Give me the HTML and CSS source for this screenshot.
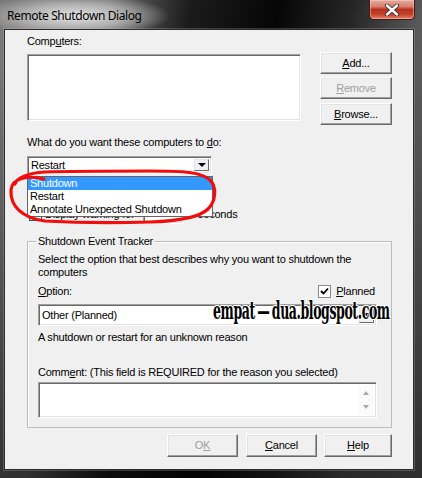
FILE: index.html
```html
<!DOCTYPE html>
<html>
<head>
<meta charset="utf-8">
<link rel="stylesheet" href="styles.css">
</head>
<body>
<div class="window">
  <div class="titlebar">
    <span class="title">Remote Shutdown Dialog</span>
    <div class="close">
      <svg width="16" height="12" viewBox="0 0 16 12">
        <path d="M3 1.5 L13 10.5 M13 1.5 L3 10.5" stroke="#3a2a2a" stroke-width="4.2" stroke-linecap="round"/>
        <path d="M3 1.5 L13 10.5 M13 1.5 L3 10.5" stroke="#ffffff" stroke-width="2.4" stroke-linecap="round"/>
      </svg>
    </div>
  </div>
  <div class="frame">
    <div class="client">
      <div class="label l-computers">Comp<u>u</u>ters:</div>
      <div class="row-computers">
        <div class="sunken listbox"></div>
        <div class="btn-col">
          <div class="btn"><u>A</u>dd...</div>
          <div class="btn disabled"><u>R</u>emove</div>
          <div class="btn browse"><u>B</u>rowse...</div>
        </div>
      </div>
      <div class="label l-todo">What do you want these computers to <u>d</u>o:</div>
      <div class="sunken combo combo-action">
        <span class="combo-text">Restart</span>
        <span class="arrow-btn"><span class="tri"></span></span>
      </div>
      <div class="warn-row">
        <span class="checkbox"></span>
        <span class="warn-text">Display warning for</span>
        <span class="sunken edit"></span>
        <span class="secs">seconds</span>
      </div>
      <div class="group">
        <span class="legend">Shutdown Event Tracker</span>
        <div class="desc">Select the option that best describes why you want to shutdown the computers</div>
        <div class="option-row">
          <span class="label"><u>O</u>ption:</span>
          <span class="planned"><span class="checkbox checked">
            <svg width="9" height="9" viewBox="0 0 9 9"><path d="M1 4 L3.5 6.5 L8 1.5" stroke="#000" stroke-width="1.8" fill="none"/></svg>
          </span><span class="planned-text"><u>P</u>lanned</span></span>
        </div>
        <div class="sunken combo combo-option">
          <span class="combo-text">Other (Planned)</span>
          <span class="arrow-btn"><span class="tri"></span></span>
        </div>
        <div class="reason">A shutdown or restart for an unknown reason</div>
        <div class="label l-comment">Comm<u>e</u>nt: (This field is REQUIRED for the reason you selected)</div>
        <div class="sunken memo">
          <span class="scroll">
            <span class="up"></span>
            <span class="down"></span>
          </span>
        </div>
      </div>
      <div class="footer">
        <div class="btn disabled w-ok">O<u>K</u></div>
        <div class="btn w-cancel"><u>C</u>ancel</div>
        <div class="btn w-help"><u>H</u>elp</div>
      </div>

      <div class="dropdown">
        <div class="item selected">Shutdown</div>
        <div class="item">Restart</div>
        <div class="item">Annotate Unexpected Shutdown</div>
      </div>
      <div class="watermark">empat — dua.blogspot.com</div>
      <svg class="scribble" width="409" height="439" viewBox="5 30 409 439">
        <path d="M44 179 C 28 175, 12 178, 11 190 C 10 206, 22 218, 45 221 C 80 223, 120 223, 150 222 C 180 221, 200 217, 208 209 C 216 201, 217 187, 210 180 C 201 172, 185 171, 150 171 C 110 171, 70 171, 45 172 C 30 173, 18 176, 15 184"
          fill="none" stroke="#f20d0d" stroke-width="3.2" stroke-linecap="round" stroke-linejoin="round"/>
      </svg>
    </div>
  </div>
</div>
</body>
</html>
```
FILE: styles.css
```css
html, body {
  margin: 0;
  padding: 0;
  width: 422px;
  height: 478px;
  overflow: hidden;
  background: #000;
}

.window {
  width: 422px;
  height: 478px;
  display: flex;
  flex-direction: column;
  background:
    linear-gradient(to bottom, rgba(0,0,0,0) 0px, rgba(0,0,0,0) 60px, rgba(0,0,0,0.55) 478px),
    linear-gradient(100deg, #7a7a7a 0%, #6a6a6a 22%, #1b1b1b 38%, #060606 55%, #262626 70%, #5a5a5a 84%, #666 100%);
  font-family: "Liberation Sans", Arial, sans-serif;
  font-size: 11px;
  letter-spacing: -0.22px;
  color: #000;
}

.titlebar {
  height: 29px;
  flex: none;
  display: flex;
  justify-content: space-between;
  align-items: flex-start;
  background: radial-gradient(ellipse 95px 22px at 75px 16px, rgba(235,235,235,0.95) 0%, rgba(200,200,200,0.7) 55%, rgba(160,160,160,0) 100%);
}

.title {
  margin: 8px 0 0 7px;
  font-family: "Noto Sans", "Open Sans", sans-serif;
  font-size: 12px;
  line-height: 16px;
  color: #000;
  letter-spacing: -0.4px;
}

.close {
  width: 44px;
  height: 19px;
  margin-right: 7px;
  border: 1px solid #3b1a14;
  border-top: none;
  border-radius: 0 0 5px 5px;
  background: linear-gradient(to bottom, #e8a89a 0%, #d2806e 35%, #b8301c 50%, #c4402a 75%, #e0826a 100%);
  box-shadow: inset 0 0 0 1px rgba(255,220,210,0.45);
  display: flex;
  align-items: center;
  justify-content: center;
}

.frame {
  flex: 1;
  display: flex;
  padding: 0 8px 8px 4px;
}

.client {
  position: relative;
  flex: 1;
  box-sizing: border-box;
  background: #f0f0f0;
  border: 1px solid #2c2c2c;
  box-shadow: 0 0 0 1px rgba(200,200,200,0.25);
  padding: 5px 21px 0 22px;
}

.label, .desc, .reason {
  line-height: 13px;
  white-space: nowrap;
}

u { text-decoration: underline; text-underline-offset: 1px; }

.row-computers {
  margin-top: 4px;
  display: flex;
  justify-content: space-between;
  align-items: flex-start;
}

.sunken {
  box-sizing: border-box;
  background: #fff;
  border: 1px solid;
  border-color: #a0a0a0 #ffffff #ffffff #a0a0a0;
  box-shadow: inset 1px 1px 0 #696969, inset -1px -1px 0 #e3e3e3;
}

.listbox {
  margin-top: 2px;
  width: 274px;
  height: 67px;
}

.btn-col {
  display: flex;
  flex-direction: column;
  gap: 3px;
}

.btn {
  box-sizing: border-box;
  width: 72px;
  height: 22px;
  background: #f0f0f0;
  border: 1px solid;
  border-color: #ffffff #696969 #696969 #ffffff;
  box-shadow: inset -1px -1px 0 #a0a0a0, inset 1px 1px 0 #e3e3e3;
  display: flex;
  align-items: center;
  justify-content: center;
  line-height: 13px;
}

.btn.browse { margin-top: 1px; }

.btn.disabled { color: #a0a0a0; }

.l-todo { margin-top: 11px; }

.combo {
  display: flex;
  align-items: center;
  justify-content: space-between;
  padding: 2px 2px 2px 3px;
}

.combo-action {
  margin-top: 7px;
  width: 185px;
  height: 18px;
}

.combo-text { line-height: 13px; }

.arrow-btn {
  box-sizing: border-box;
  width: 15px;
  height: 100%;
  background: #f0f0f0;
  border: 1px solid;
  border-color: #e3e3e3 #696969 #696969 #e3e3e3;
  display: flex;
  align-items: center;
  justify-content: center;
}

.tri {
  width: 0;
  height: 0;
  border-left: 4px solid transparent;
  border-right: 4px solid transparent;
  border-top: 4px solid #000;
}

.warn-row {
  margin-top: 30px;
  height: 20px;
  display: flex;
  align-items: center;
}

.checkbox {
  box-sizing: border-box;
  width: 13px;
  height: 13px;
  background: #fff;
  border: 1px solid #1c5180;
  display: inline-flex;
  align-items: center;
  justify-content: center;
}

.warn-row .checkbox { margin-left: 2px; }
.warn-text { margin-left: 3px; width: 98px; line-height: 13px; white-space: nowrap; }
.edit { width: 41px; height: 20px; }
.secs { margin-left: 14px; line-height: 13px; }

.group {
  margin-top: 17px;
  box-sizing: border-box;
  width: 365px;
  border: 1px solid #bcbcbc;
  box-shadow: inset 1px 1px 0 #fff;
  padding: 0 14px 9px 10px;
  display: flex;
  flex-direction: column;
  align-items: flex-start;
}

.legend {
  margin: -7px 0 0 -2px;
  padding: 0 2px;
  background: #f0f0f0;
  line-height: 13px;
}

.desc {
  margin-top: 5px;
  width: 330px;
  white-space: normal;
}

.option-row {
  margin-top: 5px;
  width: 100%;
  height: 14px;
  display: flex;
  justify-content: space-between;
  align-items: center;
}

.planned {
  display: flex;
  align-items: center;
  gap: 5px;
  margin-right: 2px;
  line-height: 13px;
}

.planned .checkbox {
  border-color: #8a8a8a;
}

.combo-option {
  margin-top: 6px;
  width: 339px;
  height: 22px;
}

.reason { margin-top: 5px; }
.l-comment { margin-top: 22px; }

.memo {
  margin-top: 3px;
  width: 339px;
  height: 36px;
  display: flex;
  justify-content: flex-end;
  padding: 2px;
}

.scroll {
  width: 16px;
  display: flex;
  flex-direction: column;
  justify-content: space-between;
  align-items: center;
  padding: 6px 0 6px;
  background: #fbfbfb;
}

.up, .down {
  width: 0;
  height: 0;
  border-left: 3.5px solid transparent;
  border-right: 3.5px solid transparent;
}
.up { border-bottom: 4px solid #a8a8a8; }
.down { border-top: 4px solid #a8a8a8; }

.footer {
  margin-top: 6px;
  display: flex;
  justify-content: flex-end;
}

.footer .btn { height: 23px; }
.w-ok { width: 71px; }
.w-cancel { width: 71px; margin-left: 8px; }
.w-help { width: 68px; margin-left: 7px; }

.dropdown {
  position: absolute;
  left: 22px;
  top: 146px;
  width: 186px;
  box-sizing: border-box;
  background: #fff;
  border: 1px solid #646464;
}

.item {
  height: 13px;
  line-height: 13px;
  padding-left: 2px;
  white-space: nowrap;
}

.item.selected {
  background: #3399ff;
  color: #fff;
}

.watermark {
  position: absolute;
  left: 208px;
  top: 266px;
  white-space: nowrap;
  font-family: "DejaVu Serif", serif;
  font-weight: bold;
  font-size: 25px;
  line-height: 30px;
  letter-spacing: -0.8px;
  word-spacing: -3px;
  color: #000;
  transform: scaleX(0.5);
  transform-origin: left top;
  text-shadow: 1px 1px 0 #fff, -1px -1px 0 #fff, 1px -1px 0 #fff, -1px 1px 0 #fff;
}

.scribble {
  position: absolute;
  left: 0;
  top: 0;
  pointer-events: none;
}
```
